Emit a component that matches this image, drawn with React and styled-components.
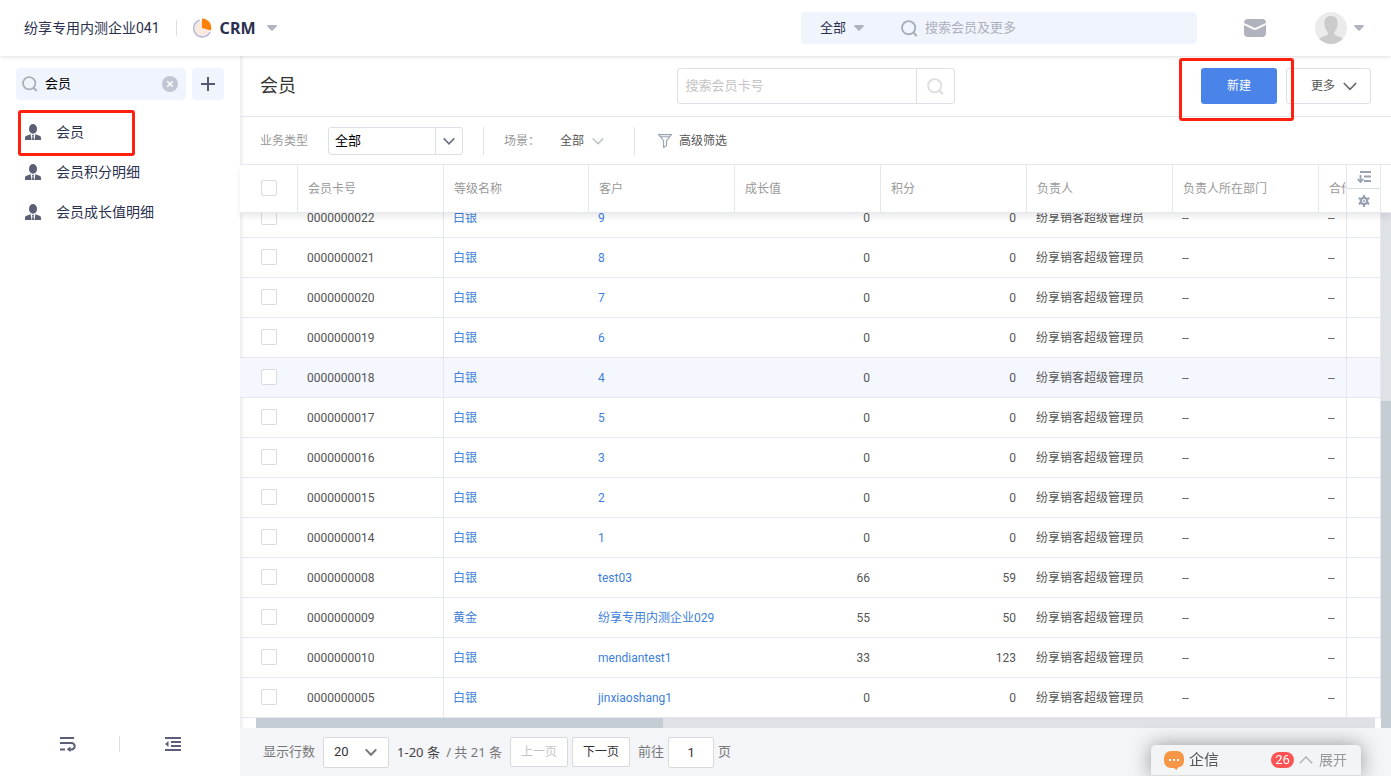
import { useState } from "react";
import styled, { createGlobalStyle, css } from "styled-components";

const GlobalStyle = createGlobalStyle`
    * {
        box-sizing: border-box;
    }
    body {
        margin: 0;
        background-color: #ffffff;
        color: #555555;
        font-family: Roboto, "Noto Sans CJK SC", sans-serif;
        font-size: 12px;
        line-height: 20px;
    }
    button, input, select {
        font-family: inherit;
        font-size: inherit;
        line-height: inherit;
        color: inherit;
        margin: 0;
    }
    button {
        cursor: pointer;
        padding: 0;
    }
    a {
        text-decoration: none;
    }
`;

const columns = ["会员卡号", "等级名称", "客户", "成长值", "积分", "负责人", "负责人所在部门", "合作伙伴"];
const owner = "纷享销客超级管理员";
const members = [
    { card: "0000000022", level: "白银", customer: "9", growth: 0, points: 0 },
    { card: "0000000021", level: "白银", customer: "8", growth: 0, points: 0 },
    { card: "0000000020", level: "白银", customer: "7", growth: 0, points: 0 },
    { card: "0000000019", level: "白银", customer: "6", growth: 0, points: 0 },
    { card: "0000000018", level: "白银", customer: "4", growth: 0, points: 0, active: true },
    { card: "0000000017", level: "白银", customer: "5", growth: 0, points: 0 },
    { card: "0000000016", level: "白银", customer: "3", growth: 0, points: 0 },
    { card: "0000000015", level: "白银", customer: "2", growth: 0, points: 0 },
    { card: "0000000014", level: "白银", customer: "1", growth: 0, points: 0 },
    { card: "0000000008", level: "白银", customer: "test03", growth: 66, points: 59 },
    { card: "0000000009", level: "黄金", customer: "纷享专用内测企业029", growth: 55, points: 50 },
    { card: "0000000010", level: "白银", customer: "mendiantest1", growth: 33, points: 123 },
    { card: "0000000005", level: "白银", customer: "jinxiaoshang1", growth: 0, points: 0 },
];
const menu = ["会员", "会员积分明细", "会员成长值明细"];

function SearchIcon({ size = 16, color = "#a9adb8" }) {
    return (
        <svg width={size} height={size} viewBox="0 0 16 16" fill="none" stroke={color} strokeWidth="1.7">
            <circle cx="7.2" cy="7.2" r="6.2" />
            <path d="M11.4 11.6L14.8 15" strokeWidth="2" />
        </svg>
    );
}

function Chevron({ size = 12, color = "#6b7080", width = 1.6, up }) {
    return (
        <svg width={size} height={size} viewBox="0 0 12 12" fill="none" stroke={color} strokeWidth={width}>
            <path d={up ? "M0.7 8.8L6 3.4l5.3 5.4" : "M0.7 3.4L6 8.8l5.3-5.4"} />
        </svg>
    );
}

function Caret() {
    return (
        <svg width="10" height="6" viewBox="0 0 10 6" fill="#b0b3c0">
            <path d="M1 0h8c.9 0 1.2.8.6 1.4L5.7 5.5a1 1 0 0 1-1.4 0L.4 1.4C-.2.8.1 0 1 0z" />
        </svg>
    );
}

function PersonIcon() {
    return (
        <svg width="16" height="16" viewBox="0 0 16 16" fill="#5b5f76">
            <ellipse cx="8" cy="4.9" rx="4" ry="4.9" />
            <path d="M5.4 9.6L6.6 16H0v-2.2c0-1 .6-1.700 1.600-2.100l3.200-1.200z" />
            <path d="M10.600 9.600L9.400 16H16v-2.200c0-1-.6-1.700-1.600-2.100l-3.200-1.200z" />
            <path d="M6.900 10.800h2.200l-.5 1.400.4 3.800H7l.4-3.800z" />
        </svg>
    );
}

function Header() {
    return (
        <TopBar>
            <Company>纷享专用内测企业041</Company>
            <TopLine />
            <Brand type="button">
                <svg width="20" height="20" viewBox="0 0 20 20">
                    <circle cx="9" cy="10.500" r="7.600" fill="#f9eadf" />
                    <path d="M6.800 2.200A8.500 8.500 0 1 0 17 13.800" fill="none" stroke="#bbbcd8" strokeWidth="1.600" />
                    <path d="M9 .5a9.300 9.300 0 0 1 8.900 12L9 10z" fill="#ff8009" />
                </svg>
                <strong>CRM</strong>
                <Caret />
            </Brand>
            <GlobalSearch>
                <ScopeButton type="button">全部<Caret /></ScopeButton>
                <SearchIcon size={17} />
                <input aria-label="全局搜索" placeholder="搜索会员及更多" />
            </GlobalSearch>
            <MailButton type="button" aria-label="邮件">
                <svg width="22" height="18" viewBox="0 0 22 18" fill="#b0b3be">
                    <path d="M4 0h14a4 4 0 0 1 4 4l-9.700 4.600a3 3 0 0 1-2.600 0L0 4a4 4 0 0 1 4-4z" />
                    <path d="M0 5.900l9.200 4.500a4 4 0 0 0 3.600 0L22 5.900V14a4 4 0 0 1-4 4H4a4 4 0 0 1-4-4z" />
                </svg>
            </MailButton>
            <UserButton type="button" aria-label="个人中心">
                <svg width="32" height="32" viewBox="0 0 32 32">
                    <clipPath id="avatar"><circle cx="16" cy="16" r="16" /></clipPath>
                    <g clipPath="url(#avatar)">
                        <rect width="32" height="32" fill="#ebebeb" />
                        <path d="M16 4c-4.700 0-7 3-6.600 7.700.2 4.200 1.500 6.600 3.300 8.400v2.300c-1.500 2.200-8.200 2-10.200 6.100V33h27v-4.500c-2-4.100-8.700-3.900-10.200-6.100v-2.300c1.800-1.800 3.100-4.200 3.300-8.400C23 7 20.700 4 16 4z" fill="#cbcbcb" />
                    </g>
                </svg>
                <Caret />
            </UserButton>
        </TopBar>
    );
}

function Sidebar() {
    const [keyword, setKeyword] = useState("会员");

    return (
        <Side>
            <SideTools>
                <SideSearch>
                    <SearchIcon />
                    <input aria-label="搜索菜单" value={keyword} onChange={(e) => setKeyword(e.target.value)} />
                    <ClearButton type="button" aria-label="清空" onClick={() => setKeyword("")}>
                        <svg width="16" height="16" viewBox="0 0 16 16">
                            <circle cx="8" cy="8" r="8" fill="#c0c6d3" />
                            <path d="M5.200 5.200l5.600 5.600M10.800 5.200l-5.600 5.600" stroke="#fff" strokeWidth="1.500" />
                        </svg>
                    </ClearButton>
                </SideSearch>
                <AddButton type="button" aria-label="添加">
                    <svg width="14" height="14" viewBox="0 0 14 14" stroke="#555a70" strokeWidth="2">
                        <path d="M7 0v14M0 7h14" />
                    </svg>
                </AddButton>
            </SideTools>
            <Menu>
                {menu.map((item, i) => (
                    <MenuItem key={item} href="#">
                        <PersonIcon />
                        {item}
                        {i === 0 && <MenuMark />}
                    </MenuItem>
                ))}
            </Menu>
            <SideFooter>
                <FootButton type="button" aria-label="换行">
                    <svg width="16" height="16" viewBox="0 0 16 16" fill="none" stroke="#5b5f76" strokeWidth="2">
                        <path d="M0 2h14M0 7h11.500a3.200 3.200 0 0 1 0 6.400H8.500M0 13.400h5" />
                        <path d="M10.500 10.500v5.500L6.800 13.300z" fill="#5b5f76" stroke="none" />
                    </svg>
                </FootButton>
                <FootLine />
                <FootButton type="button" aria-label="收起">
                    <svg width="16" height="16" viewBox="0 0 16 16" fill="none" stroke="#5b5f76" strokeWidth="2">
                        <path d="M0 2h16M6 6h10M6 10h10M0 14h16" />
                        <path d="M3.500 5v6L0 8z" fill="#5b5f76" stroke="none" />
                    </svg>
                </FootButton>
            </SideFooter>
        </Side>
    );
}

function ColGroup() {
    return (
        <colgroup>
            <col width="58" />
            <col width="146" />
            <col width="145" />
            {columns.slice(2).map((c) => <col key={c} width="146" />)}
        </colgroup>
    );
}

function MemberTable() {
    return (
        <>
            <HeadRow>
                <Clip>
                    <Grid>
                        <ColGroup />
                        <thead>
                            <tr>
                                <HeadCell><Check type="checkbox" aria-label="全选" /></HeadCell>
                                {columns.map((c) => <HeadCell key={c} scope="col">{c}</HeadCell>)}
                            </tr>
                        </thead>
                    </Grid>
                </Clip>
                <HeadTools>
                    <button type="button" aria-label="排序">
                        <svg width="14" height="12" viewBox="0 0 14 12" fill="none" stroke="#99a2b2" strokeWidth="2">
                            <path d="M3 1h11M7 5.500h7M7 10h7" />
                            <path d="M3.500 4v7M0.700 8l2.800 3 2.800-3" strokeWidth="1.800" />
                        </svg>
                    </button>
                    <button type="button" aria-label="设置">
                        <svg width="12" height="12" viewBox="0 0 12 12" fill="none" stroke="#99a2b2">
                            <circle cx="6" cy="6" r="3.200" strokeWidth="2.400" />
                            <path d="M6 0v2.500M6 9.500V12M.8 3l2.200 1.300M9 7.700L11.200 9M11.200 3L9 4.300M3 7.700L.8 9" strokeWidth="2.200" />
                            <circle cx="6" cy="6" r="1" fill="#99a2b2" stroke="none" />
                        </svg>
                    </button>
                </HeadTools>
                <HeadEnd />
            </HeadRow>
            <BodyArea>
                <BodyMain>
                    <BodyRows>
                        <Clip $bottom>
                            <Grid>
                                <ColGroup />
                                <tbody>
                                    {members.map((m) => (
                                        <Row key={m.card} $active={m.active}>
                                            <Cell><Check type="checkbox" aria-label={m.card} /></Cell>
                                            <Cell $line>{m.card}</Cell>
                                            <Cell><a href="#">{m.level}</a></Cell>
                                            <Cell><a href="#">{m.customer}</a></Cell>
                                            <Cell $right>{m.growth}</Cell>
                                            <Cell $right>{m.points}</Cell>
                                            <Cell>{owner}</Cell>
                                            <Cell>--</Cell>
                                            <Cell>--</Cell>
                                        </Row>
                                    ))}
                                </tbody>
                            </Grid>
                        </Clip>
                        <FixedColumn>
                            {members.map((m) => <FixedCell key={m.card} $active={m.active} />)}
                        </FixedColumn>
                    </BodyRows>
                    <HScroll><HThumb /></HScroll>
                </BodyMain>
                <VScroll><VThumb /></VScroll>
            </BodyArea>
        </>
    );
}

export default function App() {
    const [page, setPage] = useState("1");

    return (
        <>
            <GlobalStyle />
            <Shell>
                <Header />
                <Content>
                    <Sidebar />
                    <Main>
                        <TitleBar>
                            <h1>会员</h1>
                            <CardSearch>
                                <input aria-label="搜索会员卡号" placeholder="搜索会员卡号" />
                                <button type="button" aria-label="搜索"><SearchIcon size={17} color="#dddddd" /></button>
                            </CardSearch>
                            <Actions>
                                <NewWrap>
                                    <NewButton type="button">新建</NewButton>
                                    <NewMark />
                                </NewWrap>
                                <MoreButton type="button">更多<Chevron size={14} color="#666666" width={1.4} /></MoreButton>
                            </Actions>
                        </TitleBar>
                        <FilterBar>
                            <label htmlFor="type">业务类型</label>
                            <TypeSelect>
                                <select id="type"><option>全部</option></select>
                                <span><Chevron color="#6b7080" width={1.6} /></span>
                            </TypeSelect>
                            <FilterLine />
                            <span>场景：</span>
                            <SceneButton type="button">全部<Chevron color="#b5b9c0" width={1.3} /></SceneButton>
                            <FilterLine />
                            <FilterButton type="button">
                                <svg width="14" height="14" viewBox="0 0 14 14" fill="none" stroke="#99a2b2" strokeWidth="1.100">
                                    <path d="M.6.6h12.800L8.600 6.600v4.800l-3 2V6.600L.6.6zM2 2.800h10" />
                                </svg>
                                高级筛选
                            </FilterButton>
                        </FilterBar>
                        <MemberTable />
                        <Pager>
                            <label htmlFor="size">显示行数</label>
                            <SizeSelect>
                                <select id="size"><option>20</option></select>
                                <Chevron color="#777777" width={2} />
                            </SizeSelect>
                            <Total><b>1-20 条</b><span>/ 共 21 条</span></Total>
                            <PageButton type="button" disabled>上一页</PageButton>
                            <PageButton type="button">下一页</PageButton>
                            <label htmlFor="page">前往</label>
                            <PageInput id="page" value={page} onChange={(e) => setPage(e.target.value)} />
                            <span>页</span>
                        </Pager>
                    </Main>
                </Content>
                <Chat type="button">
                    <svg width="20" height="19" viewBox="0 0 20 19">
                        <path d="M7 0h6a7 7 0 0 1 7 7v3a7 7 0 0 1-6 6.500L12.500 19l-2.500-2H7a7 7 0 0 1-7-7V7a7 7 0 0 1 7-7z" fill="#f79646" />
                        <path d="M5 8h2v2H5zM9 8h2v2H9zM13 8h2v2h-2z" fill="#fff" />
                    </svg>
                    <ChatName>企信</ChatName>
                    <Badge>26</Badge>
                    <Chevron size={14} color="#b0b0b0" width={1.1} up />
                    <Expand>展开</Expand>
                </Chat>
            </Shell>
        </>
    );
}

const Shell = styled.div`
    display: flex;
    flex-direction: column;
    height: 100vh;
    overflow: hidden;
`;

const TopBar = styled.header`
    display: flex;
    align-items: center;
    flex: none;
    height: 56px;
    padding: 0 27px 0 24px;
    background-color: #ffffff;
    box-shadow: 0 0 5px rgba(0, 0, 0, 0.18);
    position: relative;
    z-index: 2;
`;

const Company = styled.span`
    font-size: 14px;
    color: #2a304d;
`;

const TopLine = styled.span`
    width: 1px;
    height: 16px;
    margin: 0 16px;
    background-color: #dedede;
`;

const Brand = styled.button`
    display: flex;
    align-items: center;
    border: none;
    background: none;

    strong {
        margin: 0 12px 0 7px;
        font-family: "Noto Sans", sans-serif;
        font-size: 16px;
        color: #2a304d;
    }
`;

const GlobalSearch = styled.div`
    display: flex;
    align-items: center;
    width: 396px;
    height: 32px;
    margin-left: auto;
    padding: 0 20px 0 19px;
    border-radius: 4px;
    background-color: #f0f4fd;

    input {
        flex: 1;
        min-width: 0;
        margin-left: 7px;
        padding: 0;
        border: none;
        outline: none;
        background: none;
        font-size: 13px;
    }
    input::placeholder {
        color: #adb0bb;
        opacity: 1;
    }
`;

const ScopeButton = styled.button`
    display: flex;
    align-items: center;
    gap: 8px;
    margin-right: 37px;
    border: none;
    background: none;
    font-size: 13px;
    color: #2a304d;
`;

const MailButton = styled.button`
    display: flex;
    margin-left: 47px;
    border: none;
    background: none;
`;

const UserButton = styled.button`
    display: flex;
    align-items: center;
    gap: 7px;
    margin-left: 49px;
    border: none;
    background: none;
`;

const Content = styled.div`
    display: flex;
    flex: 1;
    min-height: 0;
`;

const Side = styled.nav`
    display: flex;
    flex-direction: column;
    flex: none;
    width: 240px;
    padding-top: 12px;
`;

const SideTools = styled.div`
    display: flex;
    gap: 6px;
    padding: 0 16px;
`;

const SideSearch = styled.div`
    display: flex;
    align-items: center;
    flex: 1;
    min-width: 0;
    height: 32px;
    padding: 0 8px 0 6px;
    border-radius: 4px;
    background-color: #f0f4fd;

    input {
        flex: 1;
        min-width: 0;
        padding: 0 0 0 7px;
        border: none;
        outline: none;
        background: none;
        font-size: 13px;
        color: #000000;
    }
`;

const ClearButton = styled.button`
    display: flex;
    border: none;
    background: none;
`;

const AddButton = styled.button`
    display: flex;
    align-items: center;
    justify-content: center;
    width: 32px;
    height: 32px;
    border: none;
    border-radius: 4px;
    background-color: #f0f4fd;
`;

const Menu = styled.div`
    display: flex;
    flex-direction: column;
    flex: 1;
    padding-top: 12px;
`;

const MenuItem = styled.a`
    display: flex;
    align-items: center;
    gap: 15px;
    height: 40px;
    padding-left: 25px;
    position: relative;
    font-size: 14px;
    color: #2a304d;
`;

const mark = css`
    position: absolute;
    border: 3px solid #ff2010;
    border-radius: 3px;
    pointer-events: none;
`;

const MenuMark = styled.span`
    ${mark}
    left: 18px;
    top: -2px;
    width: 117px;
    height: 46px;
`;

const SideFooter = styled.div`
    display: flex;
    align-items: center;
    height: 64px;
`;

const FootButton = styled.button`
    display: flex;
    justify-content: center;
    width: 105px;
    border: none;
    background: none;

    &:first-child {
        width: 119px;
        padding-left: 16px;
    }
`;

const FootLine = styled.span`
    width: 1px;
    height: 16px;
    background-color: #dcdee3;
`;

const Main = styled.main`
    display: flex;
    flex-direction: column;
    flex: 1;
    min-width: 0;
    box-shadow: inset 5px 0 5px -4px rgba(0, 0, 0, 0.12);
`;

const TitleBar = styled.div`
    display: grid;
    grid-template-columns: 1fr 278px 1fr;
    align-items: center;
    flex: none;
    height: 61px;
    padding: 0 20px;
    border-bottom: 1px solid #e4e7f0;

    h1 {
        margin: 0;
        font-size: 18px;
        font-weight: 400;
        color: #333333;
    }
`;

const CardSearch = styled.div`
    display: flex;
    height: 36px;
    border: 1px solid #dcdfe6;
    border-radius: 3px;

    input {
        flex: 1;
        min-width: 0;
        padding: 0 8px;
        border: none;
        outline: none;
        background: none;
        font-size: 13px;
    }
    input::placeholder {
        color: #c4c4c4;
        opacity: 1;
    }
    button {
        display: flex;
        align-items: center;
        justify-content: center;
        width: 38px;
        border: none;
        border-left: 1px solid #dcdfe6;
        background: none;
    }
`;

const Actions = styled.div`
    display: flex;
    justify-content: flex-end;
    gap: 9px;
`;

const NewWrap = styled.div`
    position: relative;
`;

const NewButton = styled.button`
    width: 76px;
    height: 36px;
    border: none;
    border-radius: 3px;
    background-color: #4a84e8;
    color: #ffffff;
`;

const NewMark = styled.span`
    ${mark}
    left: -22px;
    top: -10px;
    width: 115px;
    height: 63px;
    z-index: 3;
`;

const MoreButton = styled.button`
    display: flex;
    align-items: center;
    gap: 8px;
    width: 85px;
    height: 36px;
    padding-left: 24px;
    border: 1px solid #dcdfe6;
    border-radius: 3px;
    background-color: #ffffff;
`;

const FilterBar = styled.div`
    display: flex;
    align-items: center;
    flex: none;
    height: 47px;
    padding: 0 20px;
    color: #999999;
`;

const TypeSelect = styled.div`
    display: flex;
    width: 135px;
    height: 28px;
    margin: 0 20px;
    border: 1px solid #dcdfe6;
    border-radius: 3px;

    select {
        flex: 1;
        padding: 0 6px;
        border: none;
        outline: none;
        appearance: none;
        background: none;
        font-size: 13px;
        color: #000000;
    }
    span {
        display: flex;
        align-items: center;
        justify-content: center;
        width: 27px;
        border-left: 1px solid #dcdfe6;
    }
`;

const FilterLine = styled.span`
    width: 1px;
    height: 28px;
    margin-right: 20px;
    background-color: #dbe3ec;
`;

const SceneButton = styled.button`
    display: flex;
    align-items: center;
    gap: 8px;
    margin: 0 30px 0 20px;
    border: none;
    background: none;
    color: #555555;
`;

const FilterButton = styled.button`
    display: flex;
    align-items: center;
    gap: 7px;
    padding-left: 3px;
    border: none;
    background: none;
    color: #555555;
`;

const HeadRow = styled.div`
    display: flex;
    flex: none;
    height: 49px;
    border-top: 1px solid #e4e7f0;
    border-bottom: 1px solid #e4e7f0;
    box-shadow: 0 4px 6px rgba(0, 0, 0, 0.08);
    position: relative;
    z-index: 1;
    background-color: #ffffff;
`;

const Clip = styled.div`
    display: flex;
    flex: 1;
    min-width: 0;
    overflow: hidden;
    align-items: ${(p) => (p.$bottom ? "flex-end" : "flex-start")};
`;

const Grid = styled.table`
    flex: none;
    width: 1225px;
    table-layout: fixed;
    border-collapse: separate;
    border-spacing: 0;
`;

const HeadCell = styled.th`
    height: 47px;
    padding: 0 10px;
    border-right: 1px solid #e4e7f0;
    font-weight: 400;
    text-align: left;
    white-space: nowrap;
    color: #999999;

    &:first-child {
        padding: 0 0 1px 21px;
    }
`;

const HeadTools = styled.div`
    display: flex;
    flex-direction: column;
    width: 35px;
    border: solid #e4e7f0;
    border-width: 0 1px;

    button {
        display: flex;
        align-items: center;
        justify-content: center;
        flex: 1;
        border: none;
        background: none;
    }
    button:first-child {
        border-bottom: 1px solid #d5dfea;
    }
`;

const HeadEnd = styled.div`
    width: 10px;
`;

const BodyArea = styled.div`
    display: flex;
    flex: 1;
    min-height: 0;
`;

const BodyMain = styled.div`
    display: flex;
    flex-direction: column;
    flex: 1;
    min-width: 0;
`;

const BodyRows = styled.div`
    display: flex;
    flex: 1;
    min-height: 0;
`;

const Row = styled.tr`
    background-color: ${(p) => (p.$active ? "#f4f7fe" : "transparent")};
`;

const Cell = styled.td`
    height: 40px;
    padding: 0 11px 0 9px;
    border-bottom: 1px solid #e4e7f0;
    border-right: ${(p) => (p.$line ? "1px solid #e4e7f0" : "none")};
    text-align: ${(p) => (p.$right ? "right" : "left")};
    white-space: nowrap;

    &:first-child {
        padding: 0 0 1px 21px;
    }
    a {
        color: #3d7fdb;
    }
`;

const Check = styled.input`
    display: block;
    width: 16px;
    height: 16px;
    margin: 0;
    appearance: none;
    border: 1px solid #d9dbe0;
    border-radius: 2px;
    background-color: #ffffff;
`;

const FixedColumn = styled.div`
    display: flex;
    flex-direction: column;
    justify-content: flex-end;
    width: 35px;
    overflow: hidden;
`;

const FixedCell = styled.div`
    flex: none;
    height: 40px;
    border: solid #e4e7f0;
    border-width: 0 1px 1px;
    background-color: ${(p) => (p.$active ? "#f4f7fe" : "#ffffff")};
`;

const HScroll = styled.div`
    flex: none;
    height: 10px;
    margin: 0 6px 0 16px;
    background-color: #dee2e6;
`;

const HThumb = styled.div`
    width: 407px;
    height: 10px;
    background-color: #c5cdd4;
`;

const VScroll = styled.div`
    display: flex;
    flex-direction: column;
    justify-content: flex-end;
    flex: none;
    width: 10px;
    background-color: #dee2e6;
`;

const VThumb = styled.div`
    height: 327px;
    background-color: #c5cdd4;
`;

const Pager = styled.div`
    display: flex;
    align-items: center;
    flex: none;
    height: 48px;
    padding: 0 23px;
    background-color: #f4f5f9;
    font-size: 13px;
    color: #777777;
`;

const SizeSelect = styled.div`
    display: flex;
    align-items: center;
    width: 66px;
    height: 31px;
    margin: 0 8px;
    padding-right: 11px;
    border: 1px solid #d9d9d9;
    border-radius: 2px;
    background-color: #ffffff;

    select {
        flex: 1;
        min-width: 0;
        padding: 0 0 0 10px;
        border: none;
        outline: none;
        appearance: none;
        background: none;
        color: #333333;
    }
`;

const Total = styled.span`
    display: flex;
    justify-content: space-between;
    min-width: 105px;
    margin-right: 8px;
    font-family: "Noto Sans", "Noto Sans CJK SC", sans-serif;

    b {
        font-weight: 400;
        color: #444444;
    }
`;

const PageButton = styled.button`
    width: 58px;
    height: 30px;
    margin-right: 4px;
    border: 1px solid #d9d9d9;
    border-radius: 2px;
    background-color: #ffffff;
    font-size: 12px;
    color: #333333;

    &:disabled {
        color: #c4c4c4;
    }
    & + label {
        margin-left: 4px;
    }
`;

const PageInput = styled.input`
    width: 46px;
    height: 31px;
    margin: 0 4px;
    padding: 0;
    border: 1px solid #d9d9d9;
    border-radius: 2px;
    background-color: #ffffff;
    text-align: center;
    color: #333333;
`;

const Chat = styled.button`
    display: flex;
    align-items: center;
    position: fixed;
    right: 30px;
    bottom: 0;
    width: 210px;
    height: 31px;
    padding: 0 14px 0 13px;
    border: none;
    border-bottom: 1px solid #dddddd;
    border-radius: 5px 5px 0 0;
    background-color: #f3f4f6;
    box-shadow: 0 0 20px rgba(0, 0, 0, 0.4);
    z-index: 4;
`;

const ChatName = styled.span`
    margin: 0 auto 0 5px;
    font-size: 15px;
    color: #555555;
`;

const Badge = styled.span`
    width: 23px;
    height: 16px;
    margin-right: 5px;
    border-radius: 8px;
    background-color: #fc5454;
    font-size: 13px;
    line-height: 16px;
    color: #ffffff;
`;

const Expand = styled.span`
    margin-left: 6px;
    font-size: 14px;
    color: #999999;
`;
